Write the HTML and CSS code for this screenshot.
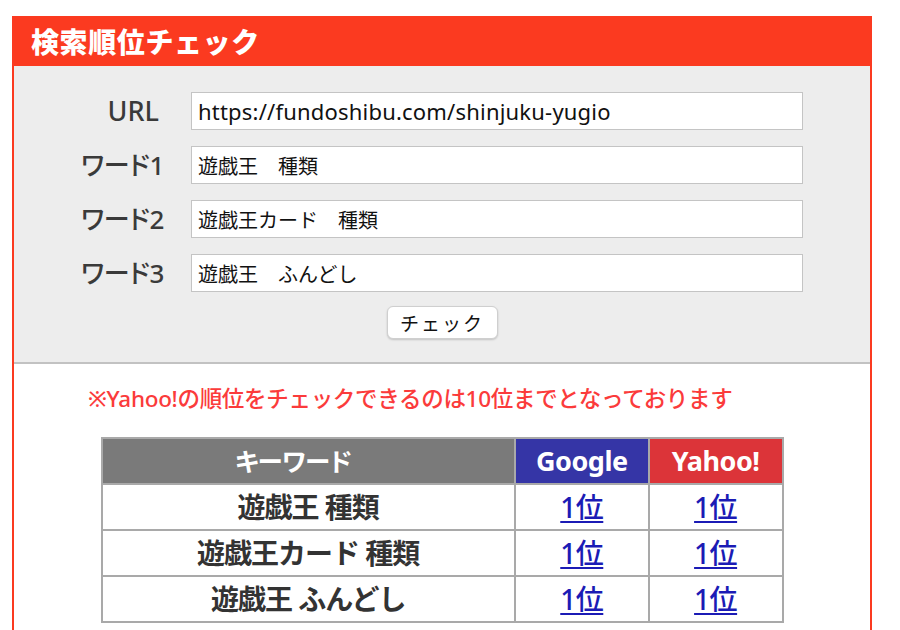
FILE: index.html
```html
<!DOCTYPE html>
<html lang="ja">
<head>
<meta charset="utf-8">
<title>検索順位チェック</title>
<link rel="stylesheet" href="styles.css">
</head>
<body>
<div class="page">
  <section class="box">
    <h1 class="box-title">検索順位チェック</h1>
    <form class="form">
      <div class="rows">
        <label class="label label-url" for="url">URL</label>
        <input class="field field-url" id="url" type="text" value="https://fundoshibu.com/shinjuku-yugio">
        <label class="label" for="w1">ワード1</label>
        <input class="field" id="w1" type="text" value="遊戯王　種類">
        <label class="label" for="w2">ワード2</label>
        <input class="field" id="w2" type="text" value="遊戯王カード　種類">
        <label class="label" for="w3">ワード3</label>
        <input class="field" id="w3" type="text" value="遊戯王　ふんどし">
      </div>
      <div class="actions">
        <button class="btn" type="button">チェック</button>
      </div>
    </form>
    <div class="result">
      <p class="notice">※Yahoo!の順位をチェックできるのは10位までとなっております</p>
      <table class="rank">
        <thead>
          <tr>
            <th class="th-kw">キーワード</th>
            <th class="th-google">Google</th>
            <th class="th-yahoo">Yahoo!</th>
          </tr>
        </thead>
        <tbody>
          <tr><td class="kw">遊戯王 種類</td><td><a href="#">1位</a></td><td><a href="#">1位</a></td></tr>
          <tr><td class="kw">遊戯王カード 種類</td><td><a href="#">1位</a></td><td><a href="#">1位</a></td></tr>
          <tr><td class="kw">遊戯王 ふんどし</td><td><a href="#">1位</a></td><td><a href="#">1位</a></td></tr>
        </tbody>
      </table>
    </div>
  </section>
</div>
</body>
</html>
```

FILE: styles.css
```css
html, body {
  margin: 0;
  padding: 0;
  background: #ffffff;
  font-family: "Noto Sans", "Noto Sans CJK JP", sans-serif;
  color: #333333;
}

.page {
  padding: 16px 0 0 12px;
}

.box {
  width: 856px;
  border: 2px solid #fb3a20;
  border-top: none;
  min-height: 640px;
  box-sizing: content-box;
}

.box-title {
  margin: 0;
  height: 50px;
  background: #fb3a20;
  color: #ffffff;
  font-family: "Noto Sans CJK JP", sans-serif;
  font-weight: 900;
  font-size: 28px;
  line-height: 50px;
  padding-left: 17px;
  letter-spacing: 0.6px;
}

.form {
  background: #ededed;
  border-bottom: 2px solid #c2c2c2;
  padding: 26px 0 23px;
}

.rows {
  display: grid;
  grid-template-columns: 150px 612px;
  column-gap: 27px;
  row-gap: 16px;
  align-items: center;
}

.label {
  text-align: right;
  font-family: "Noto Sans", "Noto Sans CJK JP", sans-serif;
  font-size: 26px;
  font-weight: 500;
  color: #3a3a3a;
  letter-spacing: -0.3px;
  font-feature-settings: "palt";
  line-height: 38px;
}

.label-url {
  font-size: 27px;
  letter-spacing: 0;
  padding-right: 5px;
}

.field {
  height: 38px;
  box-sizing: border-box;
  border: 1px solid #c4c4c4;
  background: #ffffff;
  padding: 0 6px;
  margin: 0;
  font-family: "Noto Sans", "Noto Sans CJK JP", sans-serif;
  font-size: 20px;
  color: #111111;
  outline: none;
}

.field-url {
  font-size: 22px;
  letter-spacing: 0.2px;
}

.actions {
  display: flex;
  justify-content: center;
  margin-top: 14px;
}

.btn {
  width: 111px;
  height: 33px;
  background: #ffffff;
  border: 1px solid #cfcfcf;
  border-radius: 6px;
  box-shadow: 0 1px 2px rgba(0,0,0,0.18);
  font-family: "Noto Sans CJK JP", sans-serif;
  font-size: 19px;
  color: #111111;
  letter-spacing: 2px;
  padding: 0;
}

.result {
  padding: 20px 0 0;
}

.notice {
  margin: 0 0 23px 74px;
  color: #fb3b3b;
  font-family: "Noto Sans", "Noto Sans CJK JP", sans-serif;
  font-size: 22.5px;
  font-weight: 500;
  line-height: 30px;
  letter-spacing: -0.3px;
}

.rank {
  border-collapse: collapse;
  margin: 0 auto;
  width: 683px;
}

.rank th,
.rank td {
  border: 2px solid #a9a9a9;
  height: 44px;
  padding: 0;
  text-align: center;
  font-family: "Noto Sans", "Noto Sans CJK JP", sans-serif;
  font-weight: 700;
  font-size: 27px;
  line-height: 40px;
  letter-spacing: -0.5px;
}

.rank th {
  color: #ffffff;
}

.th-kw {
  width: 383px;
  padding-right: 30px;
  background: #7a7a7a;
}

.rank .th-kw {
  font-size: 25.5px;
  font-feature-settings: "palt";
  padding-right: 30px;
}

.th-google {
  width: 132px;
  background: #3535a6;
}

.th-yahoo {
  width: 132px;
  background: #dc3439;
}

.rank td {
  color: #333333;
}

.rank .kw {
  font-size: 28px;
  letter-spacing: -1px;
}

.rank td a {
  color: #1b1bb5;
  text-decoration: underline;
  font-weight: 500;
  font-size: 28px;
  line-height: 40px;
  text-decoration-thickness: 2px;
  text-underline-offset: 3px;
}
```
